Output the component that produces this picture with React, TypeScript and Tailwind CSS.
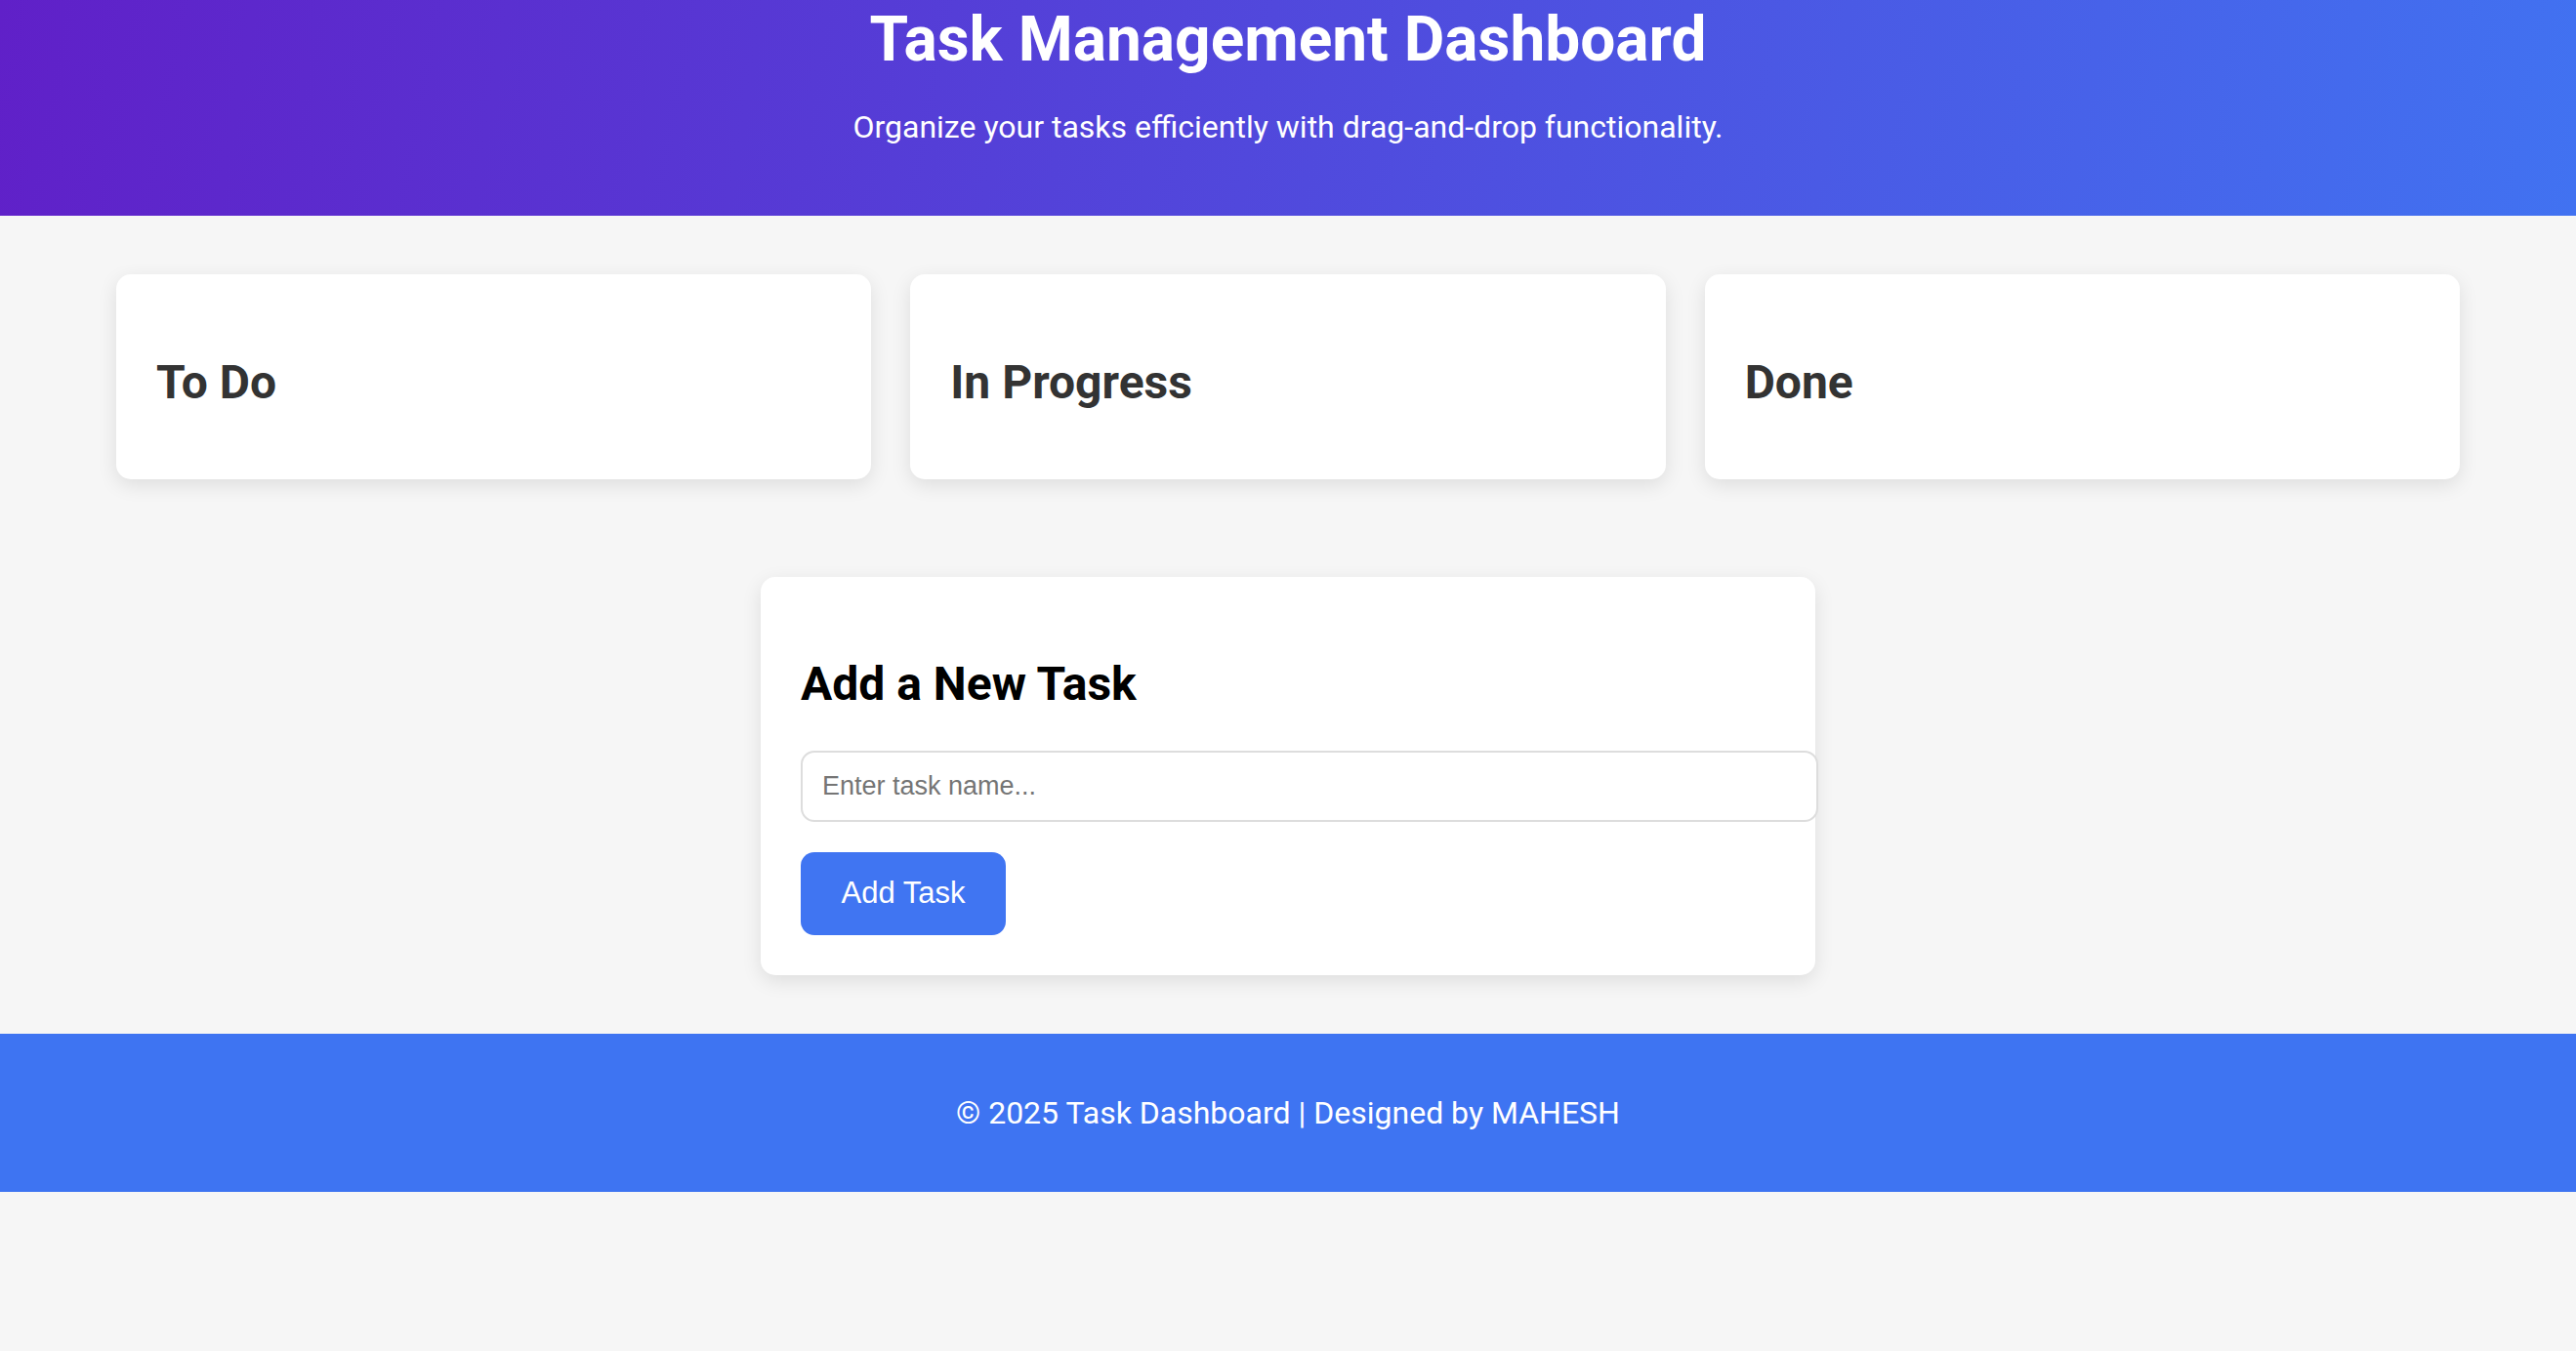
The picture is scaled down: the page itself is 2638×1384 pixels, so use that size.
import React from "react";

const columns = ["To Do", "In Progress", "Done"];

export default function App() {
  return (
    <div className="min-h-screen bg-[#f6f6f6] font-['Roboto',sans-serif]">
      {/* Header */}
      <header className="h-[221px] bg-[linear-gradient(100deg,#6020c8,#4172f1)] pt-[3px] text-center text-white">
        <h1 className="text-[64px] font-bold leading-[75px]">Task Management Dashboard</h1>
        <p className="mt-[34px] text-[32px] leading-[37px]">
          Organize your tasks efficiently with drag-and-drop functionality.
        </p>
      </header>

      {/* Columns */}
      <section className="mx-auto mt-[60px] grid w-[2400px] grid-cols-3 gap-[40px]">
        {columns.map((c) => (
          <div
            key={c}
            className="h-[210px] rounded-[15px] bg-white px-[41px] pt-[83px] shadow-[0_6px_20px_rgba(0,0,0,0.1)]"
          >
            <h2 className="text-[48px] font-bold leading-[56px] text-[#333]">{c}</h2>
          </div>
        ))}
      </section>

      {/* Add task form */}
      <section className="mx-auto mt-[100px] h-[408px] w-[1080px] rounded-[15px] bg-white px-[41px] pt-[82px] shadow-[0_6px_20px_rgba(0,0,0,0.1)]">
        <h2 className="text-[48px] font-bold leading-[56px] text-black">Add a New Task</h2>
        <input
          type="text"
          placeholder="Enter task name..."
          className="mt-[40px] block h-[73px] w-[1042px] rounded-[14px] border-2 border-[#ddd] bg-white px-[20px] font-['Liberation_Sans',Arial,sans-serif] text-[27px] text-black outline-none placeholder:text-[#757575]"
        />
        <button className="mt-[31px] h-[85px] w-[210px] rounded-[14px] bg-[#4075f2] font-['Liberation_Sans',Arial,sans-serif] text-[31px] text-white">
          Add Task
        </button>
      </section>

      {/* Footer */}
      <footer className="mt-[60px] flex h-[162px] items-center justify-center bg-[#3e74f2] text-[32px] text-white">
        © 2025 Task Dashboard | Designed by MAHESH
      </footer>
    </div>
  );
}
